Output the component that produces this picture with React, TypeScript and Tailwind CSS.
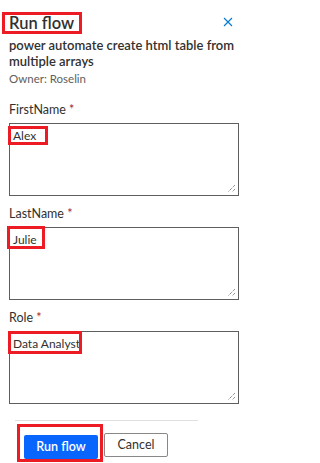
const fields = [
  { label: "FirstName", value: "Alex", box: "left-[-2px] top-[2px] w-[40px] h-[19px]" },
  { label: "LastName", value: "Julie", box: "left-[-3px] top-[-2px] w-[38px] h-[23px]" },
  { label: "Role", value: "Data Analyst", box: "left-[-2px] top-[-1px] w-[74px] h-[23px]" },
];

function ResizeGrip() {
  return (
    <svg width="9" height="9" viewBox="0 0 9 9" className="absolute bottom-[2px] right-[2px] text-[#605e5c]">
      <path d="M8 1 L1 8 M8 5 L5 8" stroke="currentColor" strokeWidth="1" strokeDasharray="1 1" />
    </svg>
  );
}

export default function App() {
  return (
    <main className="relative h-[463px] w-[262px] overflow-hidden bg-white font-['Lato',sans-serif] text-[#323130]">
      <header className="flex items-start justify-between pl-[9px] pr-[29px] pt-[14px]">
        <h1 className="relative text-[16.5px] font-semibold leading-[18px]">
          Run flow
          <span className="absolute -left-[7px] -top-[2px] h-[22px] w-[80px] border-[3px] border-[#ed1c24]" />
        </h1>
        <button className="mt-[3px]">
          <svg width="10" height="10" viewBox="0 0 10 10">
            <path d="M1 1 L9 9 M9 1 L1 9" stroke="#0078d4" strokeWidth="1.1" />
          </svg>
        </button>
      </header>

      <section className="pl-[9px] pr-[20px] pt-[5px]">
        <p className="w-[232px] text-[13px] font-semibold leading-[16px]">
          power automate create html table from multiple arrays
        </p>
        <p className="mt-[2px] text-[11.5px] leading-[16px] text-[#605e5c]">Owner: Roselin</p>
      </section>

      <form className="flex flex-col pl-[9px] pt-[14px]">
        {fields.map((f, i) => (
          <div key={f.label} className={i === 0 ? "" : "mt-[9px]"}>
            <label className="block text-[12.5px] leading-[18px]">
              {f.label} <span className="text-[#a4262c]">*</span>
            </label>
            <div className="relative mt-[4px] h-[73px] w-[230px] border border-[#605e5c]">
              <div className="px-[3px] pt-[3px] text-[12px] leading-[18px] text-[#323130]">{f.value}</div>
              <span className={`absolute border-[3px] border-[#ed1c24] ${f.box}`} />
              <ResizeGrip />
            </div>
          </div>
        ))}
      </form>

      <div className="ml-[15px] mt-[16px] h-px w-[183px] bg-[#e1dfdd]" />

      <div className="flex gap-[6px] pl-[24px] pt-[12px]">
        <div className="relative">
          <button className="h-[24px] w-[74px] rounded-[2px] bg-[#0866ff] text-[12.5px] font-semibold text-white">
            Run flow
          </button>
          <span className="absolute -left-[7px] -top-[9px] h-[38px] w-[86px] border-[3px] border-[#ed1c24]" />
        </div>
        <button className="h-[24px] w-[64px] rounded-[2px] border border-[#8a8886] bg-white text-[12.5px] text-[#323130]">
          Cancel
        </button>
      </div>
    </main>
  );
}
